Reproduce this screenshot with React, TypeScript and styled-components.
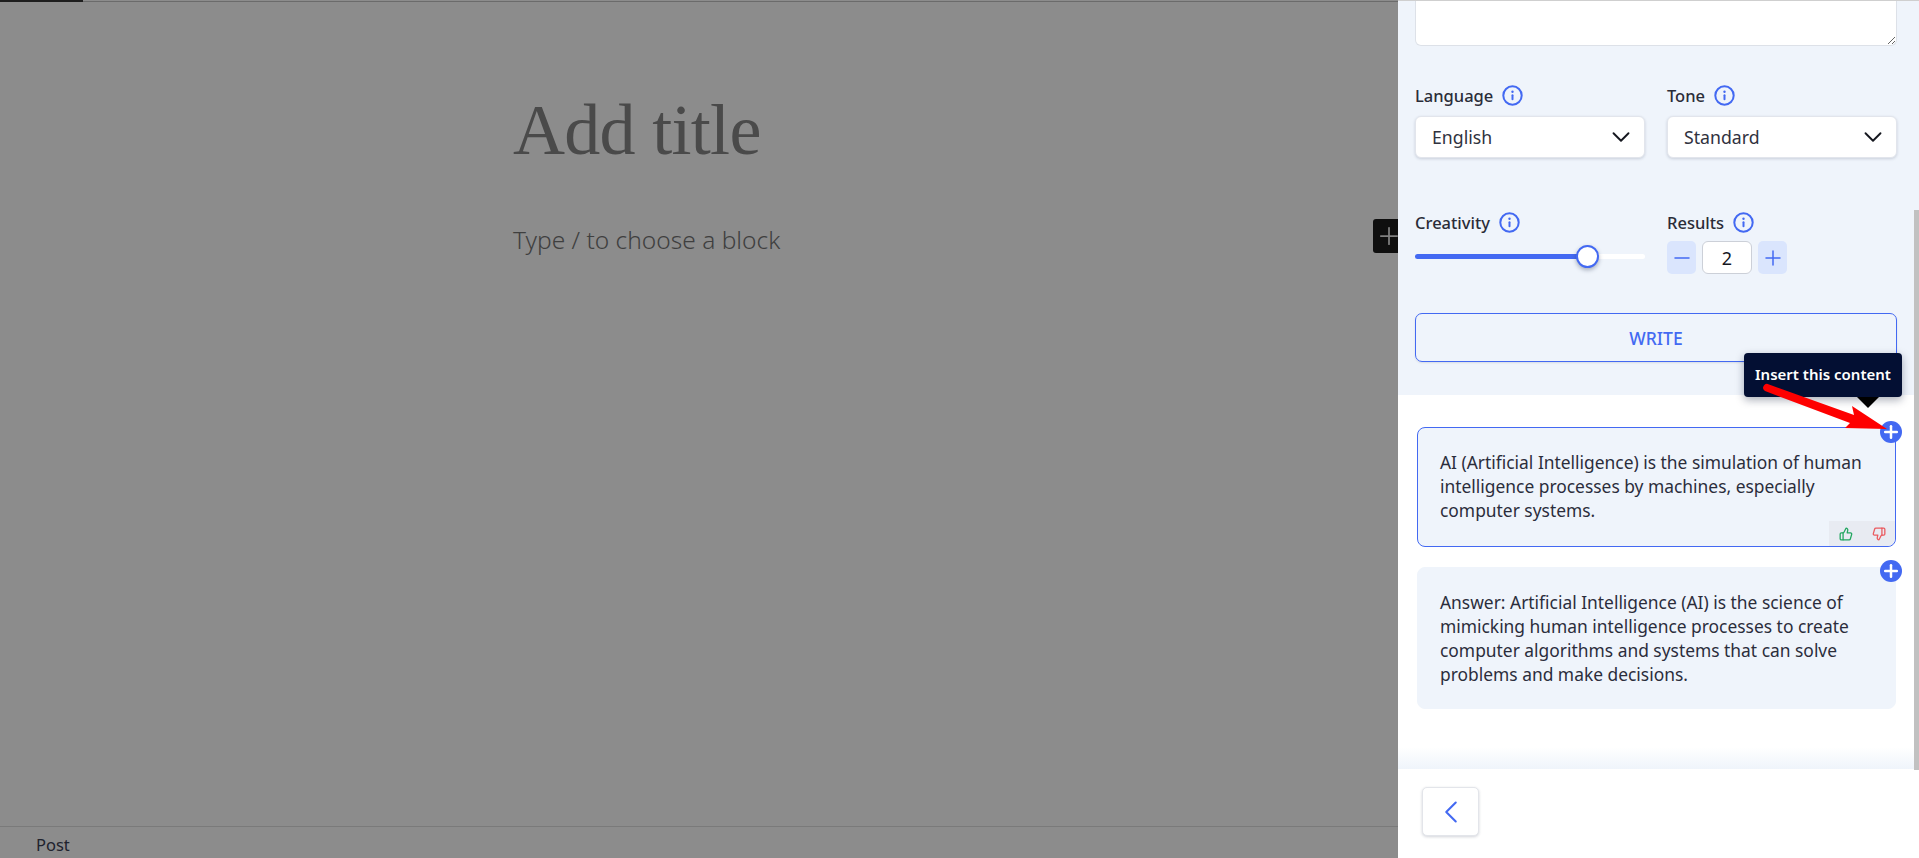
import React from "react";
import styled, { createGlobalStyle } from "styled-components";
import { Minus, Plus, ThumbsUp, ThumbsDown, ChevronDown, ChevronLeft } from "lucide-react";

const Global = createGlobalStyle`
  html, body { margin: 0; padding: 0; height: 100%; overflow: hidden; }
  body { font-family: "Noto Sans", "Open Sans", sans-serif; color: #26293b; }
  #root { height: 858px; }
  * { box-sizing: border-box; }
  button { font-family: inherit; }
`;

const BLUE = "#4369f2";
const PANEL_BG = "#eff4fb";

const Page = styled.div`
  display: flex;
  width: 1919px;
  height: 858px;
  overflow: hidden;
`;

const Editor = styled.main`
  position: relative;
  flex: 1;
  display: flex;
  flex-direction: column;
  background: #8c8c8c;
`;

const TopRule = styled.div`
  height: 2px;
  border-bottom: 1px solid #6b6b6b;
`;

const Progress = styled.div`
  width: 83px;
  height: 2px;
  background: #1e1e1e;
`;

const Canvas = styled.div`
  flex: 1;
  padding: 85px 0 0 513px;
`;

const Title = styled.h1`
  margin: 0;
  font-family: "Liberation Serif", serif;
  font-weight: 400;
  font-size: 72px;
  line-height: 86px;
  letter-spacing: -0.7px;
  color: #4a4a4a;
`;

const BlockHint = styled.p`
  margin: 50px 0 0;
  font-size: 24.5px;
  font-weight: 300;
  line-height: 34px;
  color: #3f3f3f;
`;

const Inserter = styled.div`
  position: absolute;
  top: 219px;
  right: 0;
  width: 25px;
  height: 34px;
  display: flex;
  align-items: center;
  justify-content: center;
  padding-left: 7px;
  background: #0f0f0f;
  border-radius: 3px 0 0 3px;
  color: #808080;
  overflow: hidden;
  svg { flex-shrink: 0; }
`;

const StatusBar = styled.footer`
  height: 32px;
  padding: 7px 0 0 36px;
  border-top: 1px solid #7a7a7a;
  font-size: 16.5px;
  line-height: 22px;
  color: #20222e;
`;

const Panel = styled.aside`
  position: relative;
  width: 521px;
  height: 858px;
  display: flex;
  flex-direction: column;
  background: #fff;
  border-top: 1px solid #cfcfcf;
`;

const Scroller = styled.div`
  flex: 1;
  min-height: 0;
`;

const ScrollThumb = styled.div`
  position: absolute;
  top: 209px;
  right: 0;
  width: 5px;
  height: 560px;
  background: #c1c1c1;
`;

const Form = styled.section`
  height: 394px;
  padding: 0 22px 0 17px;
  background: ${PANEL_BG};
`;

const Notes = styled.textarea`
  display: block;
  width: 100%;
  height: 45px;
  padding: 0;
  border: 1px solid #dde1e8;
  border-top: 0;
  border-radius: 0 0 6px 6px;
  background: #fff;
  resize: vertical;
  outline: none;
`;

const FieldGrid = styled.div<{ $top: number }>`
  display: grid;
  grid-template-columns: 1fr 1fr;
  column-gap: 22px;
  margin-top: ${(p) => p.$top}px;
`;

const Field = styled.div`
  min-width: 0;
`;

const LabelRow = styled.div`
  display: flex;
  align-items: center;
  gap: 9px;
  height: 24px;
  font-size: 16.5px;
  font-weight: 500;
  color: #2a2c38;
`;

const Select = styled.div`
  display: flex;
  align-items: center;
  justify-content: space-between;
  height: 42px;
  margin-top: 9px;
  padding: 0 8px 0 16px;
  background: #fff;
  border: 1px solid #e2e5ec;
  border-radius: 6px;
  box-shadow: 0 1px 3px rgba(30, 40, 70, 0.18);
  font-size: 17.7px;
  color: #30323e;
  svg { color: #15171f; }
`;

const SliderBox = styled.div`
  display: flex;
  align-items: center;
  height: 32px;
  margin-top: 6px;
`;

const Track = styled.div`
  position: relative;
  width: 100%;
  height: 5px;
  border-radius: 3px;
  background: #fff;
`;

const TrackFill = styled.div`
  height: 100%;
  border-radius: 3px;
  background: ${BLUE};
`;

const SliderKnob = styled.div`
  position: absolute;
  top: 50%;
  width: 23px;
  height: 23px;
  margin: -11.5px 0 0 -11.5px;
  border-radius: 50%;
  background: #fff;
  border: 2px solid ${BLUE};
  box-shadow: 0 2px 4px rgba(30, 40, 70, 0.35);
`;

const Stepper = styled.div`
  display: flex;
  align-items: center;
  gap: 6px;
  margin-top: 7px;
`;

const StepButton = styled.button`
  display: flex;
  align-items: center;
  justify-content: center;
  width: 29px;
  height: 33px;
  padding: 0;
  border: 0;
  border-radius: 5px;
  background: #dae5fd;
  color: ${BLUE};
`;

const StepValue = styled.div`
  display: flex;
  align-items: center;
  justify-content: center;
  width: 50px;
  height: 33px;
  background: #fff;
  border: 1px solid #ccd0d8;
  border-radius: 6px;
  font-size: 18px;
  color: #15171f;
`;

const WriteButton = styled.button`
  display: block;
  width: 100%;
  height: 49px;
  margin-top: 39px;
  border: 1px solid ${BLUE};
  border-radius: 7px;
  background: transparent;
  font-size: 17.5px;
  font-weight: 500;
  color: ${BLUE};
  box-shadow: 0 1px 2px rgba(30, 40, 70, 0.12);
`;

const Results = styled.section`
  display: flex;
  flex-direction: column;
  gap: 20px;
  padding: 32px 23px 0 19px;
`;

const Card = styled.article<{ $active?: boolean }>`
  position: relative;
  padding: 22px 22px ${(p) => (p.$active ? 24 : 22)}px;
  border: 1px solid ${(p) => (p.$active ? BLUE : PANEL_BG)};
  border-radius: 8px;
  background: ${PANEL_BG};
  font-size: 17.4px;
  line-height: 24px;
  color: #2b2d3b;
`;

const InsertButton = styled.button<{ $top: number }>`
  position: absolute;
  top: ${(p) => p.$top}px;
  right: -7px;
  display: flex;
  align-items: center;
  justify-content: center;
  width: 22px;
  height: 22px;
  padding: 0;
  border: 0;
  border-radius: 50%;
  background: ${BLUE};
  color: #fff;
`;

const Tooltip = styled.div`
  position: absolute;
  right: 0;
  bottom: calc(100% + 24px);
  width: 158px;
  height: 44px;
  padding-bottom: 2px;
  display: flex;
  align-items: center;
  justify-content: center;
  background: #030f33;
  border-radius: 4px;
  box-shadow: 0 3px 8px rgba(10, 20, 50, 0.35);
  font-size: 15px;
  font-weight: 600;
  white-space: nowrap;
  color: #fff;
  &::after {
    content: "";
    position: absolute;
    right: 23px;
    top: 100%;
    width: 22px;
    height: 11px;
    background: #000;
    clip-path: polygon(0 0, 100% 0, 50% 100%);
  }
`;

const Feedback = styled.div`
  position: absolute;
  right: 0;
  bottom: 0;
  display: flex;
  align-items: center;
  justify-content: space-around;
  width: 66px;
  height: 25px;
  background: #e8ebf2;
  border-radius: 0 0 8px 0;
`;

const Footer = styled.footer`
  position: relative;
  height: 89px;
  padding: 18px 0 0 24px;
  background: #fff;
  &::before {
    content: "";
    position: absolute;
    left: 0;
    right: 5px;
    top: -22px;
    height: 22px;
    background: linear-gradient(to bottom, rgba(239, 244, 251, 0), ${PANEL_BG});
  }
`;

const BackButton = styled.button`
  display: flex;
  align-items: center;
  justify-content: center;
  width: 57px;
  height: 49px;
  padding: 0;
  background: #fff;
  border: 1px solid #e3e5ea;
  border-radius: 5px;
  box-shadow: 0 1px 3px rgba(30, 40, 70, 0.2);
  color: ${BLUE};
`;

const Annotation = styled.svg`
  position: absolute;
  left: 0;
  top: 0;
  pointer-events: none;
`;

const InfoIcon = () => (
  <svg width="21" height="21" viewBox="0 0 21 21" fill="none">
    <circle cx="10.5" cy="10.5" r="9.2" stroke={BLUE} strokeWidth="2" />
    <circle cx="10.5" cy="6.8" r="1.2" fill={BLUE} />
    <rect x="9.5" y="9.3" width="2" height="6" rx="1" fill={BLUE} />
  </svg>
);

const Label = ({ children }: { children: React.ReactNode }) => (
  <LabelRow>
    {children}
    <InfoIcon />
  </LabelRow>
);

export default function App() {
  return (
    <Page>
      <Global />
      <Editor>
        <TopRule>
          <Progress />
        </TopRule>
        <Canvas>
          <Title>Add title</Title>
          <BlockHint>Type / to choose a block</BlockHint>
        </Canvas>
        <Inserter>
          <Plus size={28} strokeWidth={1.5} />
        </Inserter>
        <StatusBar>Post</StatusBar>
      </Editor>
      <Panel>
        <Scroller>
          <Form>
            <Notes aria-label="Notes" />
            <FieldGrid $top={37}>
              <Field>
                <Label>Language</Label>
                <Select>
                  English
                  <ChevronDown size={30} strokeWidth={1.5} />
                </Select>
              </Field>
              <Field>
                <Label>Tone</Label>
                <Select>
                  Standard
                  <ChevronDown size={30} strokeWidth={1.5} />
                </Select>
              </Field>
            </FieldGrid>
            <FieldGrid $top={52}>
              <Field>
                <Label>Creativity</Label>
                <SliderBox>
                  <Track>
                    <TrackFill style={{ width: "75%" }} />
                    <SliderKnob style={{ left: "75%" }} />
                  </Track>
                </SliderBox>
              </Field>
              <Field>
                <Label>Results</Label>
                <Stepper>
                  <StepButton aria-label="Decrease">
                    <Minus size={24} strokeWidth={1.5} />
                  </StepButton>
                  <StepValue>2</StepValue>
                  <StepButton aria-label="Increase">
                    <Plus size={24} strokeWidth={1.5} />
                  </StepButton>
                </Stepper>
              </Field>
            </FieldGrid>
            <WriteButton>WRITE</WriteButton>
          </Form>
          <Results>
            <Card $active>
              AI (Artificial Intelligence) is the simulation of human intelligence processes by machines, especially
              computer systems.
              <InsertButton $top={-7} aria-label="Insert">
                <Plus size={20} strokeWidth={3} />
                <Tooltip>Insert this content</Tooltip>
              </InsertButton>
              <Feedback>
                <ThumbsUp size={14} strokeWidth={2.2} color="#22a660" />
                <ThumbsDown size={14} strokeWidth={2.2} color="#ea5a5f" />
              </Feedback>
            </Card>
            <Card>
              Answer: Artificial Intelligence (AI) is the science of mimicking human intelligence processes to create
              computer algorithms and systems that can solve problems and make decisions.
              <InsertButton $top={-8} aria-label="Insert">
                <Plus size={20} strokeWidth={3} />
              </InsertButton>
            </Card>
          </Results>
        </Scroller>
        <Footer>
          <BackButton aria-label="Back">
            <ChevronLeft size={38} strokeWidth={1.3} />
          </BackButton>
        </Footer>
        <ScrollThumb />
        <Annotation width="521" height="858" viewBox="1398 0 521 858">
          <path
            d="M1769 383.5 L1854 414 L1852 405 L1887 428 L1845 427 L1850 422 L1765 390 A3.5 3.5 0 0 1 1769 383.5 Z"
            fill="#fe0000"
          />
        </Annotation>
      </Panel>
    </Page>
  );
}
